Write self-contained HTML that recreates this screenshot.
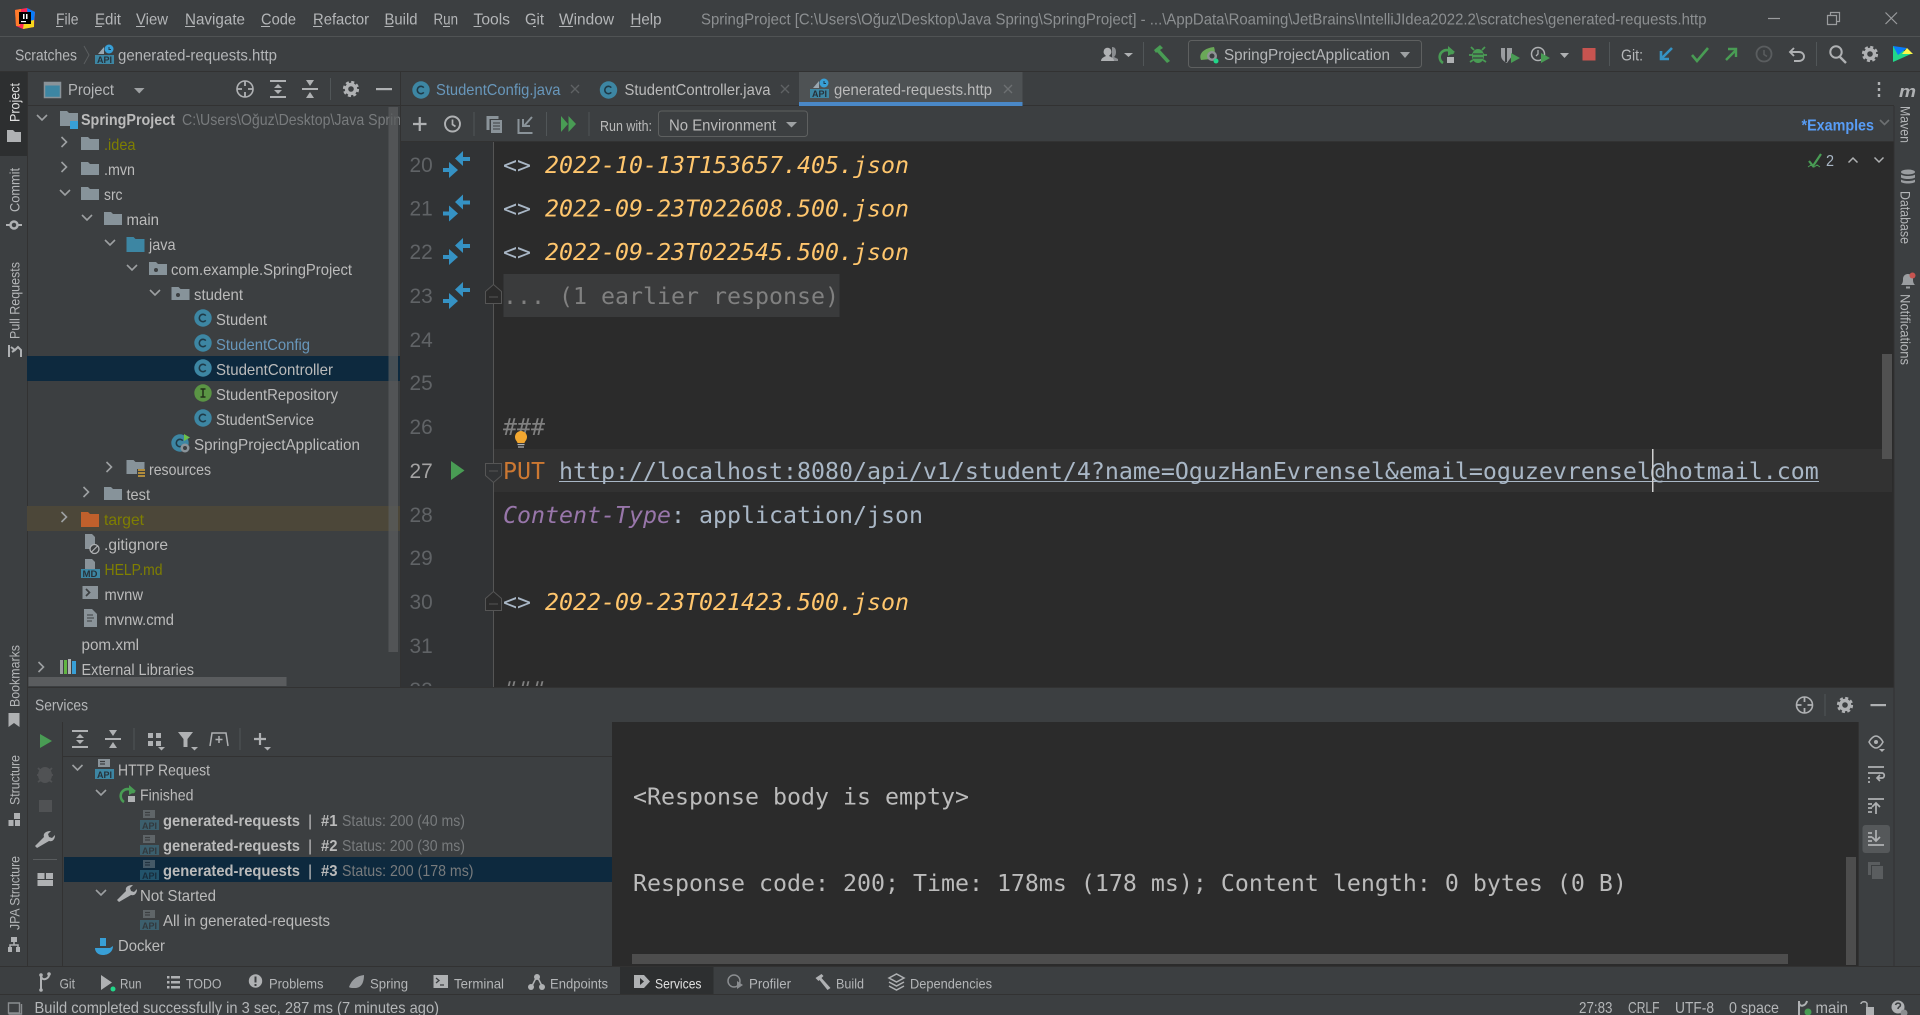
<!DOCTYPE html>
<html><head><meta charset="utf-8"><title>SpringProject</title>
<style>
html,body{margin:0;padding:0;background:#3c3f41;width:1920px;height:1015px;overflow:hidden}
svg{display:block}
text{font-family:"Liberation Sans",sans-serif;font-size:16px;fill:#b4b6b8;white-space:pre}
.t{fill:#bbbbbb}.d{fill:#8c8f91}.g{fill:#787b7d}.o{fill:#7f7f00}.b{fill:#6897bb}.w{fill:#e0e0e0}
.bd{font-weight:bold}
.v{font-size:14px}
.m{font-family:"DejaVu Sans Mono","Liberation Mono",monospace;font-size:23.25px;fill:#a9b7c6}
.i{font-style:italic}.y{fill:#ffc66d}.n{font-size:21px;fill:#606366}
.api{font-size:9px;font-weight:bold;fill:#27323a}
</style></head><body>
<svg width="1920" height="1015" viewBox="0 0 1920 1015" xmlns="http://www.w3.org/2000/svg">
<defs>
<clipPath id="ct"><rect x="27" y="106" width="373" height="580"/></clipPath>
<clipPath id="ce"><rect x="400" y="142" width="1494" height="544"/></clipPath>
<clipPath id="cs"><rect x="0" y="994" width="1920" height="21"/></clipPath>
<g id="fo"><path d="M0 0h7l2 2h9v11H0z" fill="#87939a"/></g>
<g id="cd"><path d="M-5-3L0 2L5-3" fill="none" stroke="#9da0a2" stroke-width="1.6"/></g>
<g id="cr"><path d="M-2.5-5L2.5 0L-2.5 5" fill="none" stroke="#9da0a2" stroke-width="1.6"/></g>
<g id="cc"><circle r="8.7" fill="#3d86a3"/><path d="M2.8-2.4A3.7 3.7 0 1 0 2.8 2.4" fill="none" stroke="#1f3a47" stroke-width="1.6"/></g>
<g id="ar"><path d="M463 151L455 158.500L463 166V161H470V157H463z" fill="#3592c4"/><path d="M449 162L458 170L449 178V172H443V168H449z" fill="#3592c4"/></g>
<g id="gear"><circle r="4.500" fill="none" stroke="#afb1b3" stroke-width="3.400"/><circle r="6.800" fill="none" stroke="#afb1b3" stroke-width="2.600" stroke-dasharray="3 2.340"/></g>
<g id="loc"><circle r="8" fill="none" stroke="#afb1b3" stroke-width="1.600"/><path d="M0-8V-3M0 3V8M-8 0H-3M3 0H8" stroke="#afb1b3" stroke-width="1.800"/></g>
<g id="exp"><path d="M0 0h16v2H0zM0 16h16v2H0z" fill="#afb1b3"/><path d="M8 4l4 4H4zM8 14l4-4H4z" fill="#afb1b3"/></g>
<g id="col"><path d="M0 8h16v2H0z" fill="#afb1b3"/><path d="M4 0h8l-4 6zM4 18h8l-4-6z" fill="#afb1b3"/></g>
<g id="doc"><rect x="3" y="0" width="12" height="8" fill="#8a9399"/><path d="M5 2.500h5M5 5h5" stroke="#3c3f41" stroke-width="1.200"/><rect x="0" y="10" width="19" height="10" fill="#3d86a3"/></g>
<g id="rerun"><path d="M15 5A7 7 0 1 0 5 14" fill="none" stroke="#499c54" stroke-width="2.600" transform="translate(0 2)"/><path d="M8 0L15 6L8 10z" fill="#499c54" transform="translate(2 -1)"/><rect x="9" y="10" width="7" height="6" fill="#afb1b3"/></g>
</defs>

<!-- base -->
<rect width="1920" height="1015" fill="#3c3f41"/>

<!-- title bar -->
<rect x="0" y="36" width="1920" height="1" fill="#505354"/>
<g transform="translate(15 8)">
<path d="M0 2L12 0L20 4L19 19L8 21L1 18z" fill="#fe2857"/><path d="M12 0L20 4L19 14L13 12z" fill="#087cfa"/><path d="M0 2L6 1L5 18L1 18z" fill="#fe7c2b"/><path d="M8 21L19 19L19 12L9 14z" fill="#f7d51c"/>
<rect x="4" y="4" width="12" height="12" fill="#000"/><rect x="8" y="6" width="1.500" height="5" fill="#fff"/><rect x="11" y="6" width="1.500" height="5" fill="#fff"/><rect x="6" y="13" width="5" height="1.200" fill="#fff"/>
</g>
<g>
<text x="56" y="24.500" textLength="22.500" lengthAdjust="spacingAndGlyphs">File</text>
<text x="95" y="24.500" textLength="26" lengthAdjust="spacingAndGlyphs">Edit</text>
<text x="136" y="24.500" textLength="32" lengthAdjust="spacingAndGlyphs">View</text>
<text x="185" y="24.500" textLength="60" lengthAdjust="spacingAndGlyphs">Navigate</text>
<text x="261" y="24.500" textLength="35" lengthAdjust="spacingAndGlyphs">Code</text>
<text x="313" y="24.500" textLength="56" lengthAdjust="spacingAndGlyphs">Refactor</text>
<text x="384.500" y="24.500" textLength="33" lengthAdjust="spacingAndGlyphs">Build</text>
<text x="433.500" y="24.500" textLength="24.500" lengthAdjust="spacingAndGlyphs">Run</text>
<text x="473.500" y="24.500" textLength="36.500" lengthAdjust="spacingAndGlyphs">Tools</text>
<text x="525" y="24.500" textLength="19" lengthAdjust="spacingAndGlyphs">Git</text>
<text x="559" y="24.500" textLength="55" lengthAdjust="spacingAndGlyphs">Window</text>
<text x="630.500" y="24.500" textLength="31" lengthAdjust="spacingAndGlyphs">Help</text>
<path d="M56 26.500h7M95 26.500h7M136 26.500h9M185 26.500h10M261 26.500h9M313 26.500h9M384.500 26.500h9M443 26.500h7M473.500 26.500h8M533 26.500h3M559 26.500h14M630.500 26.500h10" stroke="#b4b6b8" stroke-width="1"/>
</g>
<text class="d" x="701" y="24.500" textLength="1005.500" lengthAdjust="spacingAndGlyphs">SpringProject [C:\Users\Oğuz\Desktop\Java Spring\SpringProject] - ...\AppData\Roaming\JetBrains\IntelliJIdea2022.2\scratches\generated-requests.http</text>
<path d="M1768 18.500h12" stroke="#9a9c9e" stroke-width="1.200"/>
<path d="M1827.500 15.500h9v9h-9zM1830.500 15.500v-3h9v9h-3" fill="none" stroke="#9a9c9e" stroke-width="1.200"/>
<path d="M1885.500 12.500l11.500 11.500M1897 12.500l-11.500 11.500" stroke="#9a9c9e" stroke-width="1.200"/>

<!-- nav bar -->
<rect x="0" y="71" width="1920" height="1" fill="#323232"/>
<text x="15" y="60.500" textLength="62" lengthAdjust="spacingAndGlyphs">Scratches</text>
<path d="M84 46l5 9-5 9" fill="none" stroke="#5a5d5f" stroke-width="1"/>
<g transform="translate(95 45)"><path d="M3 9L9 2V9z" fill="#9aa7b0"/><circle cx="14" cy="4" r="4.500" fill="#389fd6"/><path d="M14 2v2.500h2" stroke="#1c3a4c" fill="none"/><rect x="0" y="10" width="19" height="9" fill="#3d86a3"/><text class="api" x="2" y="18" textLength="15" lengthAdjust="spacingAndGlyphs">API</text></g>
<text x="118" y="60.500" textLength="159" lengthAdjust="spacingAndGlyphs">generated-requests.http</text>

<path d="M1112 47c3 0 4 2 4 5s-1 4-2 5l4 2v2h-6z" fill="#8a8d90"/><path d="M1101 61c0-3 3-4 5-5-2-2-3-3-2-6s6-3 7 0 0 4-2 6c2 1 5 2 5 5z" fill="#afb1b3"/><path d="M1124 53h9l-4.500 4z" fill="#afb1b3"/>
<rect x="1143" y="42" width="1" height="24" fill="#515658"/>
<path d="M1154 50l6-5 3 3-3 2 10 11-3 2-10-11-1 1z" fill="#499c54"/>
<rect x="1188.500" y="40.500" width="233" height="27" rx="3" fill="#3c3f41" stroke="#5e6060"/>
<path d="M1201 60c-3-7 4-12 13-13 2 6 0 9-3 12z" fill="#6aa858"/><circle cx="1212" cy="56" r="5" fill="#8f9396"/><circle cx="1212" cy="56" r="2.500" fill="#3c3f41"/><circle cx="1216" cy="61" r="2.500" fill="#21d789"/>
<text x="1224" y="60" textLength="166" lengthAdjust="spacingAndGlyphs">SpringProjectApplication</text>
<path d="M1400 52h10l-5 6z" fill="#9ea1a3"/>
<use href="#rerun" x="1438" y="47"/>
<g fill="#499c54"><ellipse cx="1478" cy="56" rx="6" ry="7"/><path d="M1471 47l3 3M1485 47l-3 3M1469 55h4M1483 55h4M1470 62l3-2M1486 62l-3-2" stroke="#499c54" stroke-width="1.800"/></g><path d="M1473 54h10M1473 58h10" stroke="#3c3f41" stroke-width="1.200"/>
<path d="M1501 48h11v8l-5 7c-4-2-6-4-6-8z" fill="#9a9da0"/><path d="M1506 48v14" stroke="#3c3f41" stroke-width="2"/><path d="M1511 53l9 5-9 5z" fill="#499c54"/>
<circle cx="1538" cy="54" r="6.500" fill="none" stroke="#afb1b3" stroke-width="1.500"/><path d="M1538 50v4l-2 2" fill="none" stroke="#afb1b3" stroke-width="1.300"/><path d="M1541 53l9 5-9 5z" fill="#499c54"/>
<path d="M1560 53h9l-4.500 5z" fill="#afb1b3"/>
<rect x="1582.500" y="48" width="13" height="12.500" fill="#c75450"/>
<rect x="1609" y="42" width="1" height="24" fill="#515658"/>
<text x="1621" y="60.500" textLength="22" lengthAdjust="spacingAndGlyphs">Git:</text>
<path d="M1672 48l-10 10M1661 51v8h8" fill="none" stroke="#3592c4" stroke-width="2.600"/>
<path d="M1692 55l5 6 11-13" fill="none" stroke="#499c54" stroke-width="2.600"/>
<path d="M1726 60l10-10M1728 49h8v8" fill="none" stroke="#499c54" stroke-width="2.400"/>
<circle cx="1764" cy="54" r="7.500" fill="none" stroke="#5a5d5f" stroke-width="1.800"/><path d="M1764 50v4.500l3 2" fill="none" stroke="#5a5d5f" stroke-width="1.500"/>
<path d="M1794 48l-4 4 4 4M1790 52h9c3 0 5 2 5 4.500s-2 4.500-5 4.500h-5" fill="none" stroke="#afb1b3" stroke-width="1.900"/>
<rect x="1816" y="42" width="1" height="24" fill="#515658"/>
<circle cx="1836" cy="52" r="5.700" fill="none" stroke="#afb1b3" stroke-width="2"/><path d="M1840 57l6 6" stroke="#afb1b3" stroke-width="2.400"/>
<use href="#gear" x="1870" y="54"/>
<g transform="translate(1893 45)"><path d="M0 1L18 9L0 17z" fill="#21d789"/><path d="M0 1L14 3L5 10z" fill="#087cfa"/><path d="M14 3L20 9L9 9z" fill="#fcf84a"/></g>

<!-- left strip -->
<rect x="27" y="72" width="1" height="894" fill="#323232"/>
<rect x="0" y="72" width="27" height="84" fill="#2d2f30"/>
<rect x="0" y="71" width="1920" height="1" fill="#323232"/>
<text class="v w" transform="translate(19.500 122) rotate(-90)" textLength="39" lengthAdjust="spacingAndGlyphs">Project</text>
<path d="M7 130h6l2 2h6v10H7z" fill="#afb1b3"/>
<text class="v" transform="translate(19.500 212) rotate(-90)" textLength="44" lengthAdjust="spacingAndGlyphs">Commit</text>
<circle cx="14" cy="225" r="3.500" fill="none" stroke="#afb1b3" stroke-width="2.500"/><path d="M6 225h4M18 225h4" stroke="#afb1b3" stroke-width="2"/>
<text class="v" transform="translate(19.500 339) rotate(-90)" textLength="77" lengthAdjust="spacingAndGlyphs">Pull Requests</text>
<path d="M9 345v12M11 347l4 3 3-3 3 3v7M12 352l3-2" fill="none" stroke="#afb1b3" stroke-width="2"/>
<text class="v" transform="translate(19.500 707) rotate(-90)" textLength="62" lengthAdjust="spacingAndGlyphs">Bookmarks</text>
<path d="M8.500 713h11v14l-5.500-4-5.500 4z" fill="#afb1b3"/>
<text class="v" transform="translate(19.500 805) rotate(-90)" textLength="50" lengthAdjust="spacingAndGlyphs">Structure</text>
<path d="M14 813h6v6h-6zM8.500 820h5v6h-5zM15 820h5v6h-5z" fill="#afb1b3"/>
<text class="v" transform="translate(19.500 930) rotate(-90)" textLength="74" lengthAdjust="spacingAndGlyphs">JPA Structure</text>
<path d="M11 937h6v5h-6zM8 947h4v5H8zM16 947h4v5h-4z" fill="#afb1b3"/><path d="M14 942v3M10 947v-2h8v2" fill="none" stroke="#afb1b3" stroke-width="1.500"/>

<!-- project panel header -->
<rect x="400" y="72" width="1" height="615" fill="#323232"/>
<rect x="27" y="105" width="1867" height="1" fill="#323232"/>
<rect x="44.500" y="82.500" width="16" height="15" fill="#3d86a3" stroke="#8a9399" stroke-width="1.500"/><rect x="44.500" y="82.500" width="16" height="3" fill="#8a9399"/>
<text x="68" y="95" textLength="46" lengthAdjust="spacingAndGlyphs">Project</text>
<path d="M134 88h10.500l-5.250 5.500z" fill="#9ea1a3"/>
<use href="#loc" x="245" y="89"/>
<use href="#exp" x="270" y="80"/>
<use href="#col" x="302" y="80"/>
<rect x="330" y="78" width="1" height="22" fill="#515658"/>
<use href="#gear" x="351" y="89"/>
<rect x="376" y="88" width="16" height="2.200" fill="#afb1b3"/>

<!-- project tree -->
<rect x="27" y="356" width="373" height="25" fill="#0d293e"/>
<rect x="27" y="506" width="373" height="25" fill="#4c4739"/>
<g clip-path="url(#ct)">
<g transform="translate(0 -1)">
<use href="#cd" x="42" y="119"/><use href="#cr" x="64" y="143"/><use href="#cr" x="64" y="168"/><use href="#cd" x="65" y="194"/><use href="#cd" x="87" y="219"/><use href="#cd" x="110" y="244"/><use href="#cd" x="132" y="269"/><use href="#cd" x="155" y="294"/><use href="#cr" x="109" y="468"/><use href="#cr" x="86" y="493"/><use href="#cr" x="64" y="518"/><use href="#cr" x="41" y="668"/>

<path d="M60 112h7l2 2h9v13H60z" fill="#87939a"/><rect x="70" y="122" width="8" height="8" fill="#389fd6"/>
<text class="t bd" x="81" y="126" textLength="94" lengthAdjust="spacingAndGlyphs">SpringProject</text>
<text class="g" x="182" y="126" textLength="227" lengthAdjust="spacingAndGlyphs">C:\Users\Oğuz\Desktop\Java Spring</text>

<use href="#fo" x="81" y="138"/><text class="o" x="104" y="151" textLength="31.500" lengthAdjust="spacingAndGlyphs">.idea</text>
<use href="#fo" x="81" y="163"/><text class="t" x="104" y="176" textLength="31" lengthAdjust="spacingAndGlyphs">.mvn</text>
<use href="#fo" x="81" y="188"/><text class="t" x="104" y="201" textLength="18.500" lengthAdjust="spacingAndGlyphs">src</text>
<use href="#fo" x="104" y="213"/><text class="t" x="126.500" y="226" textLength="32.500" lengthAdjust="spacingAndGlyphs">main</text>
<path d="M126.500 238h7l2 2h9v13h-18z" fill="#3d86a3"/><text class="t" x="149" y="251" textLength="26.500" lengthAdjust="spacingAndGlyphs">java</text>
<use href="#fo" x="149" y="263"/><circle cx="156" cy="271" r="2" fill="#3c3f41"/><text class="t" x="171" y="276" textLength="181" lengthAdjust="spacingAndGlyphs">com.example.SpringProject</text>
<use href="#fo" x="171.500" y="288"/><circle cx="178" cy="296" r="2" fill="#3c3f41"/><text class="t" x="194" y="301" textLength="49" lengthAdjust="spacingAndGlyphs">student</text>

<use href="#cc" x="203" y="319"/><text class="t" x="216" y="326" textLength="51" lengthAdjust="spacingAndGlyphs">Student</text>
<use href="#cc" x="203" y="344"/><text class="b" x="216" y="351" textLength="94" lengthAdjust="spacingAndGlyphs">StudentConfig</text>
<use href="#cc" x="203" y="369"/><text class="t" x="216" y="376" textLength="117" lengthAdjust="spacingAndGlyphs">StudentController</text>
<circle cx="203" cy="394" r="8.700" fill="#5a9444"/><path d="M200.500 390h5M200.500 398h5M203 390v8" stroke="#223019" stroke-width="1.500"/><text class="t" x="216" y="401" textLength="122" lengthAdjust="spacingAndGlyphs">StudentRepository</text>
<use href="#cc" x="203" y="419"/><text class="t" x="216" y="426" textLength="98" lengthAdjust="spacingAndGlyphs">StudentService</text>
<use href="#cc" x="180" y="444"/><path d="M184 435l6 3.500-6 3.500z" fill="#6cc04a"/><circle cx="185" cy="449" r="4.500" fill="#8a9399"/><circle cx="185" cy="449" r="2" fill="#3c3f41"/><text class="t" x="194" y="451" textLength="166" lengthAdjust="spacingAndGlyphs">SpringProjectApplication</text>

<path d="M126.500 461h7l2 2h9v12h-18z" fill="#87939a"/><rect x="137" y="470" width="8" height="9" fill="#3c3f41"/><path d="M138 471h7M138 474h7M138 477h7" stroke="#d6a53c" stroke-width="1.500"/><text class="t" x="149" y="476" textLength="62" lengthAdjust="spacingAndGlyphs">resources</text>
<use href="#fo" x="104" y="488"/><text class="t" x="126.500" y="501" textLength="23.500" lengthAdjust="spacingAndGlyphs">test</text>
<path d="M81 513h7l2 2h9v13H81z" fill="#c0602c"/><text class="o" x="104" y="526" textLength="40" lengthAdjust="spacingAndGlyphs">target</text>

<path d="M85 535h7l3 3v12H85z" fill="#8a9399"/><circle cx="94.500" cy="550" r="4.500" fill="#3c3f41" stroke="#afb1b3" stroke-width="1.300"/><path d="M91.500 553l6-6" stroke="#afb1b3" stroke-width="1.200"/><text class="t" x="104" y="551" textLength="64" lengthAdjust="spacingAndGlyphs">.gitignore</text>
<path d="M85 560h7l3 3v7H85z" fill="#8a9399"/><rect x="81" y="570" width="19" height="9" fill="#3d86a3"/><text class="api" x="82.500" y="578" textLength="15" lengthAdjust="spacingAndGlyphs">MD</text><text class="o" x="104.500" y="576" textLength="58" lengthAdjust="spacingAndGlyphs">HELP.md</text>
<rect x="82.500" y="587" width="15.500" height="13" fill="#8a9399"/><path d="M86 590l3.500 3.500L86 597" fill="none" stroke="#3c3f41" stroke-width="1.700"/><text class="t" x="104.500" y="601" textLength="38.500" lengthAdjust="spacingAndGlyphs">mvnw</text>
<path d="M84 610h8l5 5v13H84z" fill="#8a9399"/><path d="M87 616h6M87 619h7M87 622h5" stroke="#3c3f41" stroke-width="1.100"/><text class="t" x="104.500" y="626" textLength="69.500" lengthAdjust="spacingAndGlyphs">mvnw.cmd</text>
<text class="t" x="81.500" y="651" textLength="57.500" lengthAdjust="spacingAndGlyphs">pom.xml</text>
<path d="M60 661h3v14h-3z" fill="#9a9da0"/><path d="M64 661h3v14h-3z" fill="#62b543"/><path d="M68 660h3v15h-3z" fill="#afb1b3"/><path d="M72 662h4v13h-4z" fill="#389fd6"/><text class="t" x="81.500" y="676" textLength="112.500" lengthAdjust="spacingAndGlyphs">External Libraries</text>
</g>
</g>
<rect x="388.500" y="107" width="9.500" height="545" fill="#5a5c5e" opacity=".75"/>
<rect x="28.500" y="677" width="258" height="9" fill="#5a5c5e"/>

<!-- editor tabs -->
<use href="#cc" x="421" y="90"/>
<text class="b" x="436" y="95" textLength="124.500" lengthAdjust="spacingAndGlyphs">StudentConfig.java</text>
<path d="M571 85l8 8M579 85l-8 8" stroke="#5f6264" stroke-width="1.300"/>
<use href="#cc" x="608.500" y="90"/>
<text class="t" x="624.500" y="95" textLength="146" lengthAdjust="spacingAndGlyphs">StudentController.java</text>
<path d="M781 85l8 8M789 85l-8 8" stroke="#5f6264" stroke-width="1.300"/>
<rect x="799" y="72" width="223.500" height="30" fill="#4e5254"/>
<rect x="799" y="102" width="223.500" height="4" fill="#4a88c7"/>
<g transform="translate(810 79)"><path d="M3 9L9 2V9z" fill="#9aa7b0"/><circle cx="14" cy="4" r="4.500" fill="#389fd6"/><path d="M14 2v2.500h2" stroke="#1c3a4c" fill="none"/><rect x="0" y="10" width="19" height="9" fill="#3d86a3"/><text class="api" x="2" y="18" textLength="15" lengthAdjust="spacingAndGlyphs">API</text></g>
<text class="t" x="834" y="95" textLength="158" lengthAdjust="spacingAndGlyphs">generated-requests.http</text>
<path d="M1004 85l8 8M1012 85l-8 8" stroke="#6d7072" stroke-width="1.300"/>
<path d="M1879 82v3M1879 88v3M1879 94v3" stroke="#afb1b3" stroke-width="2.400"/>

<!-- editor toolbar -->
<rect x="401" y="141" width="1493" height="1" fill="#323232"/>
<path d="M413 124h13.500M419.750 117v14" stroke="#afb1b3" stroke-width="2.200"/>
<circle cx="452.500" cy="124" r="7.500" fill="none" stroke="#afb1b3" stroke-width="1.900"/><path d="M452.500 119.500v5l3 2" fill="none" stroke="#afb1b3" stroke-width="1.700"/>
<rect x="473.500" y="112" width="1" height="24" fill="#515658"/>
<path d="M486.500 116v14h3V119h9v-3z" fill="#8a9399"/><rect x="491" y="120" width="11" height="13" fill="#8a9399"/><path d="M493 123h7M493 126h7M493 129h7" stroke="#3c3f41" stroke-width="1.100"/>
<path d="M518.500 119v14h14M532 117l-8 9M523 119v7h7" fill="none" stroke="#8a9399" stroke-width="2"/>
<rect x="546" y="112" width="1" height="24" fill="#515658"/>
<path d="M561 116l7 8-7 8zM568.500 116l7.500 8-7.500 8" fill="#499c54"/>
<rect x="588.500" y="112" width="1" height="24" fill="#515658"/>
<text class="t" x="600" y="131" textLength="52" lengthAdjust="spacingAndGlyphs" style="font-size:15px">Run with:</text>
<rect x="658.500" y="111" width="149" height="25.500" rx="3" fill="#3c3f41" stroke="#5e6060"/>
<text class="t" x="669" y="130.500" textLength="107" lengthAdjust="spacingAndGlyphs">No Environment</text>
<path d="M786 122h11l-5.500 5.500z" fill="#9ea1a3"/>
<text class="bd" x="1801.500" y="130.500" textLength="72.500" lengthAdjust="spacingAndGlyphs" style="fill:#589df6">*Examples</text>
<path d="M1880 120l4.500 4.500 4.500-4.500" fill="none" stroke="#6d7072" stroke-width="1.600"/>

<!-- editor -->
<rect x="401" y="142" width="93" height="545" fill="#313335"/>
<rect x="494" y="142" width="1400" height="545" fill="#2b2b2b"/>
<rect x="1893.500" y="106" width="1" height="860" fill="#323232"/>
<rect x="494" y="449" width="1398" height="43" fill="#323232"/>
<rect x="493" y="142" width="1" height="545" fill="#555555"/>
<rect x="503.500" y="274" width="336" height="43" fill="#3a3b3c"/>
<rect x="1882" y="354" width="10" height="105" fill="#515151"/>

<g clip-path="url(#ce)">
<g transform="translate(0 -1)">
<text class="n" x="409.500" y="173" textLength="23.200" lengthAdjust="spacingAndGlyphs">20</text>
<text class="n" x="409.500" y="216.500" textLength="23.200" lengthAdjust="spacingAndGlyphs">21</text>
<text class="n" x="409.500" y="260" textLength="23.200" lengthAdjust="spacingAndGlyphs">22</text>
<text class="n" x="409.500" y="304" textLength="23.200" lengthAdjust="spacingAndGlyphs">23</text>
<text class="n" x="409.500" y="348" textLength="23.200" lengthAdjust="spacingAndGlyphs">24</text>
<text class="n" x="409.500" y="391" textLength="23.200" lengthAdjust="spacingAndGlyphs">25</text>
<text class="n" x="409.500" y="435" textLength="23.200" lengthAdjust="spacingAndGlyphs">26</text>
<text class="n" x="409.500" y="479" textLength="23.200" lengthAdjust="spacingAndGlyphs" style="fill:#a4a3a3">27</text>
<text class="n" x="409.500" y="523" textLength="23.200" lengthAdjust="spacingAndGlyphs">28</text>
<text class="n" x="409.500" y="566" textLength="23.200" lengthAdjust="spacingAndGlyphs">29</text>
<text class="n" x="409.500" y="610" textLength="23.200" lengthAdjust="spacingAndGlyphs">30</text>
<text class="n" x="409.500" y="654" textLength="23.200" lengthAdjust="spacingAndGlyphs">31</text>
<text class="n" x="409.500" y="698" textLength="23.200" lengthAdjust="spacingAndGlyphs">32</text>
</g>

<use href="#ar"/><use href="#ar" y="43.500"/><use href="#ar" y="87"/><use href="#ar" y="131"/>
<path d="M451 461l13.500 9.500-13.500 9.500z" fill="#499c54"/>
<path d="M485.500 291.500l8-7 8 7v12h-16z" fill="#2b2b2b" stroke="#555" stroke-width="1"/><path d="M489 297h9" stroke="#555"/>
<path d="M485.500 463.500h16v12l-8 7-8-7z" fill="#313335" stroke="#555" stroke-width="1"/><path d="M489 471h9" stroke="#555"/>
<path d="M485.500 598.500l8-7 8 7v12h-16z" fill="#2b2b2b" stroke="#555" stroke-width="1"/><path d="M489 604h9" stroke="#555"/>

<text class="m" x="503" y="173">&lt;&gt; <tspan class="i y">2022-10-13T153657.405.json</tspan></text>
<text class="m" x="503" y="216.500">&lt;&gt; <tspan class="i y">2022-09-23T022608.500.json</tspan></text>
<text class="m" x="503" y="260">&lt;&gt; <tspan class="i y">2022-09-23T022545.500.json</tspan></text>
<text class="m" x="503" y="304" style="fill:#808080">... (1 earlier response)</text>
<text class="m" x="503" y="435" style="fill:#808080">###</text>
<path d="M515 437a6 6 0 1 1 12 0c0 3-2 4-2.500 6h-7c-.5-2-2.500-3-2.500-6z" fill="#f2a730"/><path d="M517.500 444.500h7M518 447h6" stroke="#afb1b3" stroke-width="1.300"/>
<text class="m" x="503" y="479"><tspan style="fill:#cc7832">PUT</tspan> http://localhost:8080/api/v1/student/4?name=OguzHanEvrensel&amp;email=oguzevrensel@hotmail.com</text>
<rect x="559" y="481" width="1260" height="1" fill="#a9b7c6"/>
<rect x="1652" y="449" width="1.500" height="43" fill="#d0d0d0"/>
<text class="m" x="503" y="523"><tspan class="i" style="fill:#9876aa">Content-Type</tspan>: application/json</text>
<text class="m" x="503" y="610">&lt;&gt; <tspan class="i y">2022-09-23T021423.500.json</tspan></text>
<text class="m" x="503" y="698" style="fill:#808080">###</text>
</g>
<path d="M1809 161l4 5 8-12" fill="none" stroke="#499c54" stroke-width="2.200"/><path d="M1808 167l3-2 3 2 3-2 3 2" fill="none" stroke="#499c54" stroke-width="1"/>
<text x="1826" y="166" style="fill:#a9b7c6" textLength="8" lengthAdjust="spacingAndGlyphs">2</text>
<path d="M1848.500 162.500l4.500-4.500 4.500 4.500M1874.500 157.500l4.500 4.500 4.500-4.500" fill="none" stroke="#afb1b3" stroke-width="1.500"/>

<!-- right strip -->
<text transform="translate(1899 97)" style="font-size:17px;font-weight:bold;font-style:italic;fill:#afb1b3" textLength="17" lengthAdjust="spacingAndGlyphs">m</text>
<text class="v" transform="translate(1900.500 106) rotate(90)" textLength="37" lengthAdjust="spacingAndGlyphs">Maven</text>
<ellipse cx="1908" cy="172" rx="7" ry="2.500" fill="#9a9da0"/><path d="M1901 174.500c2 2 12 2 14 0v3c-2 2-12 2-14 0zM1901 179.500c2 2 12 2 14 0v2.500c-2 2-12 2-14 0z" fill="#9a9da0"/>
<text class="v" transform="translate(1900.500 191) rotate(90)" textLength="53" lengthAdjust="spacingAndGlyphs">Database</text>
<path d="M1901 285c2-2 2-4 2-6 0-3 2-5 5-5s5 2 5 5c0 2 0 4 2 6z" fill="#9a9da0"/><path d="M1906 286.500h4v2h-4z" fill="#9a9da0"/><circle cx="1912.500" cy="275.500" r="3" fill="#c75450"/>
<text class="v" transform="translate(1900.500 294) rotate(90)" textLength="71" lengthAdjust="spacingAndGlyphs">Notifications</text>

<!-- services -->
<rect x="27" y="687" width="1867" height="1" fill="#323232"/>
<text x="35" y="710.500" textLength="53" lengthAdjust="spacingAndGlyphs">Services</text>
<use href="#loc" x="1804.500" y="705"/>
<rect x="1824.500" y="694" width="1" height="22" fill="#515658"/>
<use href="#gear" x="1845" y="705"/>
<rect x="1870.500" y="704" width="15.500" height="2.200" fill="#afb1b3"/>

<rect x="62" y="722" width="1" height="244" fill="#323232"/>
<rect x="63" y="756" width="549" height="1" fill="#323232"/>
<rect x="612" y="722" width="1246" height="244" fill="#2b2b2b"/>
<rect x="1858" y="722" width="1" height="244" fill="#323232"/>

<path d="M40 734l12 7-12 7z" fill="#499c54"/>
<ellipse cx="45" cy="775" rx="7" ry="8" fill="#505254"/><path d="M38 768l3 3M52 768l-3 3M37 775h5M48 775h5M38 782l3-2M52 782l-3-2" stroke="#505254" stroke-width="1.800"/>
<rect x="39" y="800" width="13" height="12" fill="#505254"/>
<path d="M39 847l-2-2 9-9c-1-3 1-6 7-6l-3 3 1 3 3 1 3-3c0 5-3 7-6 6z" fill="#afb1b3" transform="translate(-2 1)"/>
<rect x="33" y="859" width="24" height="1" fill="#5a5d5f"/>
<path d="M37.500 873h7v6h-7zM46 873h7v6h-7zM37.500 880h15.500v6H37.500z" fill="#afb1b3"/>

<use href="#exp" x="72" y="730"/>
<use href="#col" x="105" y="730"/>
<rect x="133.500" y="728" width="1" height="22" fill="#515658"/>
<path d="M148 733h5v5h-5zM156 733h5v5h-5zM148 741h5v5h-5zM156 741h5v5h-5z" fill="#afb1b3"/><path d="M158 747h7l-3.500 3.500z" fill="#afb1b3"/>
<path d="M178 732h15l-5.500 7v8h-4v-8z" fill="#afb1b3"/><path d="M191 747h7l-3.500 3.500z" fill="#afb1b3"/>
<path d="M210 746l2-13h14l2 13M212 733h14M219 736v7M215.500 739.500h7" fill="none" stroke="#afb1b3" stroke-width="1.500"/>
<rect x="239.500" y="728" width="1" height="22" fill="#515658"/>
<path d="M254 739h12M260 733v12" stroke="#afb1b3" stroke-width="2.200"/><path d="M264 747h7l-3.500 3.500z" fill="#afb1b3"/>

<rect x="64" y="857" width="548" height="25" fill="#0d293e"/>
<g transform="translate(0 -1)">
<use href="#cd" x="77.500" y="769"/><use href="#cd" x="101" y="794"/><use href="#cd" x="101" y="894"/>

<use href="#doc" x="95" y="760"/><text class="api" x="97" y="779" textLength="15" lengthAdjust="spacingAndGlyphs">API</text>
<text class="t" x="118" y="776.500" textLength="92" lengthAdjust="spacingAndGlyphs">HTTP Request</text>
<use href="#rerun" x="119" y="787"/>
<text class="t" x="140" y="801.500" textLength="53.500" lengthAdjust="spacingAndGlyphs">Finished</text>

<g opacity=".45"><use href="#doc" x="140" y="811"/><text class="api" x="142" y="830" textLength="15" lengthAdjust="spacingAndGlyphs">API</text></g>
<text class="t bd" x="163" y="827" textLength="137" lengthAdjust="spacingAndGlyphs">generated-requests</text>
<text class="t" x="308" y="827">|</text>
<text class="t bd" x="321" y="827" textLength="16.500" lengthAdjust="spacingAndGlyphs">#1</text>
<text class="g" x="342" y="827" textLength="123" lengthAdjust="spacingAndGlyphs">Status: 200 (40 ms)</text>

<g opacity=".45"><use href="#doc" x="140" y="836"/><text class="api" x="142" y="855" textLength="15" lengthAdjust="spacingAndGlyphs">API</text></g>
<text class="t bd" x="163" y="852" textLength="137" lengthAdjust="spacingAndGlyphs">generated-requests</text>
<text class="t" x="308" y="852">|</text>
<text class="t bd" x="321" y="852" textLength="16.500" lengthAdjust="spacingAndGlyphs">#2</text>
<text class="g" x="342" y="852" textLength="123" lengthAdjust="spacingAndGlyphs">Status: 200 (30 ms)</text>

<g opacity=".45"><use href="#doc" x="140" y="861"/><text class="api" x="142" y="880" textLength="15" lengthAdjust="spacingAndGlyphs">API</text></g>
<text class="t bd" x="163" y="877" textLength="137" lengthAdjust="spacingAndGlyphs">generated-requests</text>
<text class="t" x="308" y="877">|</text>
<text class="t bd" x="321" y="877" textLength="16.500" lengthAdjust="spacingAndGlyphs">#3</text>
<text class="g" x="342" y="877" textLength="131.500" lengthAdjust="spacingAndGlyphs">Status: 200 (178 ms)</text>

<path d="M119 903l-2-2 9-9c-1-3 1-6 7-6l-3 3 1 3 3 1 3-3c0 5-3 7-6 6z" fill="#afb1b3"/>
<text class="t" x="140" y="902" textLength="76" lengthAdjust="spacingAndGlyphs">Not Started</text>
<g opacity=".45"><use href="#doc" x="140" y="911"/><text class="api" x="142" y="930" textLength="15" lengthAdjust="spacingAndGlyphs">API</text></g>
<text class="t" x="163" y="927" textLength="167" lengthAdjust="spacingAndGlyphs">All in generated-requests</text>
<path d="M95 949h15l3-2c0 6-5 9-10 9-5 0-8-3-8-7z" fill="#389fd6"/><path d="M100 939h6v8h-6zM100 941h4v5h-4z" fill="#389fd6"/>
<text class="t" x="118" y="952" textLength="47" lengthAdjust="spacingAndGlyphs">Docker</text>
</g>

<!-- response -->
<text class="m" x="633" y="804.500" style="fill:#bbbbbb">&lt;Response body is empty&gt;</text>
<text class="m" x="633" y="891" style="fill:#bbbbbb">Response code: 200; Time: 178ms (178 ms); Content length: 0 bytes (0 B)</text>
<rect x="632" y="954" width="1156" height="10" fill="#4d4d4d"/>
<rect x="1846" y="857" width="10" height="108" fill="#4d4d4d"/>

<!-- response actions -->
<path d="M1869 742c2-4 5-6 7-6s5 2 7 6c-2 4-5 6-7 6s-5-2-7-6z" fill="none" stroke="#afb1b3" stroke-width="1.500"/><circle cx="1876" cy="742" r="2" fill="#afb1b3"/><path d="M1879 749h6l-3 3z" fill="#afb1b3"/>
<path d="M1868 767h16M1868 773h14c3 0 3 5 0 5h-5M1880 775l-3 3 3 3M1868 778h2M1868 782h2" fill="none" stroke="#afb1b3" stroke-width="1.700"/>
<path d="M1868 799h16M1876 814v-11M1872 807l4-4 4 4M1868 804h4M1868 808h4M1868 812h4" fill="none" stroke="#afb1b3" stroke-width="1.700"/>
<rect x="1862.500" y="825" width="27.500" height="28" rx="3" fill="#55585a"/>
<path d="M1868 845h16M1876 830v11M1872 837l4 4 4-4M1868 833h4M1868 837h4M1868 841h4" fill="none" stroke="#afb1b3" stroke-width="1.700"/>
<path d="M1868 862v13h3V865h9v-3z" fill="#5a5d5f"/><rect x="1872" y="866" width="11" height="13" fill="#5a5d5f"/>

<!-- tool tabs -->
<rect x="0" y="966" width="1920" height="1" fill="#323232"/>
<rect x="0" y="994" width="1920" height="1" fill="#323232"/>
<rect x="620" y="967" width="93.500" height="27" fill="#2d2f30"/>
<path d="M41 975v14M41 975c0 7 8 4 8 0" fill="none" stroke="#afb1b3" stroke-width="2"/><circle cx="41" cy="975" r="1.800" fill="#afb1b3"/><circle cx="49" cy="974" r="1.800" fill="#afb1b3"/><circle cx="41" cy="990" r="1.800" fill="#afb1b3"/>
<text x="59.500" y="988.500" textLength="15.500" lengthAdjust="spacingAndGlyphs" style="font-size:14px">Git</text>
<path d="M101 975l11 7.500-11 7.500z" fill="#afb1b3"/><circle cx="113" cy="989" r="2.500" fill="#21d789"/>
<text x="120" y="988.500" textLength="21.500" lengthAdjust="spacingAndGlyphs" style="font-size:14px">Run</text>
<path d="M167 976h2.500v2.500H167zM167 981h2.500v2.500H167zM167 986h2.500v2.500H167zM171 976h9v2.500h-9zM171 981h9v2.500h-9zM171 986h9v2.500h-9z" fill="#afb1b3"/>
<text x="186" y="988.500" textLength="35.500" lengthAdjust="spacingAndGlyphs" style="font-size:14px">TODO</text>
<circle cx="255.500" cy="981" r="6.700" fill="#afb1b3"/><path d="M255.500 976.500v6M255.500 984v2" stroke="#3c3f41" stroke-width="2"/>
<text x="269" y="988.500" textLength="54.500" lengthAdjust="spacingAndGlyphs" style="font-size:14px">Problems</text>
<path d="M349 987c3-8 8-11 15-12 0 8-3 13-9 13-3 0-5 0-6-1z" fill="#9a9da0"/>
<text x="370" y="988.500" textLength="38" lengthAdjust="spacingAndGlyphs" style="font-size:14px">Spring</text>
<rect x="433.500" y="975" width="14.500" height="13" fill="#afb1b3"/><path d="M436 978l3 2.500-3 2.500M440 985h4" fill="none" stroke="#3c3f41" stroke-width="1.300"/>
<text x="454" y="988.500" textLength="50" lengthAdjust="spacingAndGlyphs" style="font-size:14px">Terminal</text>
<circle cx="537" cy="977" r="3" fill="#afb1b3"/><circle cx="531" cy="987" r="3" fill="#afb1b3"/><circle cx="542" cy="987" r="3" fill="#afb1b3"/><path d="M536 978l-4 8M538 978l4 8" stroke="#afb1b3" stroke-width="1.500"/>
<text x="550" y="988.500" textLength="58" lengthAdjust="spacingAndGlyphs" style="font-size:14px">Endpoints</text>
<path d="M634 975h10l6 6.500-6 6.500h-10z" fill="#afb1b3"/><path d="M640 978l4 3.500-4 3.500z" fill="#2d2f30"/>
<text class="w" x="655" y="988.500" textLength="46.500" lengthAdjust="spacingAndGlyphs" style="font-size:14px">Services</text>
<circle cx="734" cy="981" r="6" fill="none" stroke="#8a8d90" stroke-width="1.500"/><path d="M737 981l6 4-6 4z" fill="#8a8d90"/>
<text x="749" y="988.500" textLength="42" lengthAdjust="spacingAndGlyphs" style="font-size:14px">Profiler</text>
<path d="M815.500 978l6-4 2 2-2 2 9 10-3 2-8-10-1 1z" fill="#afb1b3"/>
<text x="836" y="988.500" textLength="28" lengthAdjust="spacingAndGlyphs" style="font-size:14px">Build</text>
<path d="M889 978l7.500-4 7.500 4-7.500 4zM889 982l7.500 4 7.500-4M889 986l7.500 4 7.500-4" fill="none" stroke="#afb1b3" stroke-width="1.500"/>
<text x="910" y="988.500" textLength="82" lengthAdjust="spacingAndGlyphs" style="font-size:14px">Dependencies</text>

<!-- status bar -->
<g clip-path="url(#cs)">
<path d="M8.500 1003h11v10H8.500zM8.500 1014h13v-10" fill="none" stroke="#8a8d90" stroke-width="1.400"/>
<text x="34.500" y="1013" textLength="404.500" lengthAdjust="spacingAndGlyphs">Build completed successfully in 3 sec, 287 ms (7 minutes ago)</text>
<text x="1579" y="1013" textLength="33.500" lengthAdjust="spacingAndGlyphs">27:83</text>
<text x="1628" y="1013" textLength="31.500" lengthAdjust="spacingAndGlyphs">CRLF</text>
<text x="1675" y="1013" textLength="39" lengthAdjust="spacingAndGlyphs">UTF-8</text>
<text x="1729" y="1013" textLength="50" lengthAdjust="spacingAndGlyphs">0 space</text>
<path d="M1799 1001v14M1799 1002c0 6 7 4 8-1" fill="none" stroke="#afb1b3" stroke-width="2"/><circle cx="1808" cy="1012" r="3.500" fill="#499c54"/>
<text x="1815.500" y="1013" textLength="32.500" lengthAdjust="spacingAndGlyphs">main</text>
<rect x="1866" y="1007" width="8" height="8" fill="#afb1b3"/><path d="M1861 1004c0-3 6-3 6 0v3" fill="none" stroke="#afb1b3" stroke-width="1.500"/>
<circle cx="1898" cy="1007" r="6.500" fill="#afb1b3"/><path d="M1895.500 1005c1-3 5-2 5 0s-2.500 1.500-2.500 4" fill="none" stroke="#3c3f41" stroke-width="1.500"/><circle cx="1904" cy="1013" r="3.500" fill="#8a8d90"/>
</g>
</svg>
</body></html>
